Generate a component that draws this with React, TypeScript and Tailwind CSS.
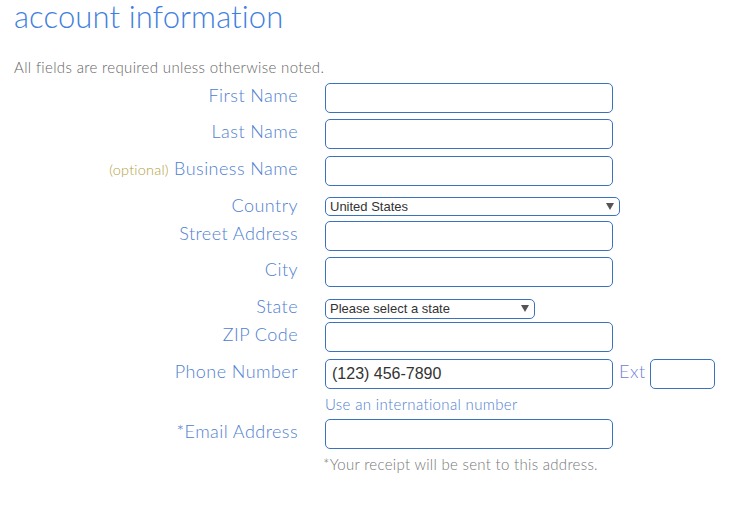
import React from "react";

const labelCls =
  "w-[284px] shrink-0 text-right text-[18px] leading-[24px] font-light tracking-[0.45px] text-[#4f80d0]";
const inputCls =
  "block h-[30px] w-[288px] rounded-[5px] border border-[#3a73bb] bg-white px-[6px] outline-none";

function Tri() {
  return (
    <svg width="8" height="7" viewBox="0 0 8 7" className="pointer-events-none absolute right-[6px] top-[6px]">
      <path d="M0 0 H8 L4 7 Z" fill="#555" />
    </svg>
  );
}

function Row({ label, children, className = "" }: { label: React.ReactNode; children: React.ReactNode; className?: string }) {
  return (
    <div className={"flex items-start " + className}>
      <div className={labelCls}>{label}</div>
      <div className="ml-[27px]">{children}</div>
    </div>
  );
}

export default function App() {
  return (
    <div
      className="relative h-[505px] w-[745px] overflow-hidden bg-white pl-[14px]"
      style={{ fontFamily: "Lato, 'Open Sans', sans-serif" }}
    >
      <h1 className="mt-[-4px] text-[31px] font-light leading-[40px] tracking-[0.1px] text-[#3f7fe0]">
        account information
      </h1>
      <p className="mt-[22px] text-[15px] font-light leading-[18px] tracking-[0.35px] text-[#666]">
        All fields are required unless otherwise noted.
      </p>
      <div className="flex flex-col">
        <Row label="First Name" className="mt-[7px]">
          <input className={inputCls} />
        </Row>
        <Row label="Last Name" className="mt-[6px]">
          <input className={inputCls} />
        </Row>
        <Row
          label={
            <>
              <span className="text-[14.5px] tracking-[0.2px] text-[#b3a040]">(optional)</span> Business Name
            </>
          }
          className="mt-[7px]"
        >
          <input className={inputCls} />
        </Row>
        <Row label="Country" className="mt-[7px]">
          <div className="relative mt-[4px] h-[19px] w-[295px]">
            <div
              className="h-[19px] w-[295px] rounded-[5px] border border-[#3a73bb] bg-white pl-[4px] text-[13px] leading-[17px] text-[#333]"
              style={{ fontFamily: "'Liberation Sans', Arial, sans-serif" }}
            >
              United States
            </div>
            <Tri />
          </div>
        </Row>
        <Row label="Street Address" className="mt-[4px]">
          <input className={inputCls} />
        </Row>
        <Row label="City" className="mt-[6px]">
          <input className={inputCls} />
        </Row>
        <Row label="State" className="mt-[7px]">
          <div className="relative mt-[5px] h-[20px] w-[210px]">
            <div
              className="h-[20px] w-[210px] rounded-[5px] border border-[#3a73bb] bg-white pl-[4px] text-[13px] leading-[18px] text-[#333]"
              style={{ fontFamily: "'Liberation Sans', Arial, sans-serif" }}
            >
              Please select a state
            </div>
            <Tri />
          </div>
        </Row>
        <Row label="ZIP Code" className="mt-[3px]">
          <input className={inputCls} />
        </Row>
        <Row label="Phone Number" className="mt-[7px]">
          <div className="flex items-start">
            <input
              className={inputCls + " text-[16px] text-[#333]"}
              style={{ fontFamily: "'Liberation Sans', Arial, sans-serif" }}
              defaultValue="(123) 456-7890"
            />
            <span className="ml-[6px] text-[18px] font-light leading-[24px] tracking-[0.6px] text-[#6f80d4]">Ext</span>
            <input className="ml-[4px] block h-[30px] w-[65px] rounded-[5px] border border-[#3a73bb] bg-white outline-none" />
          </div>
          <div className="mt-[6px] text-[15px] font-light leading-[18px] tracking-[0.35px] text-[#4f80d0]">
            Use an international number
          </div>
        </Row>
        <Row label="*Email Address" className="mt-[6px]">
          <input className={inputCls} />
          <div className="ml-[-2px] mt-[6px] text-[15px] font-light leading-[18px] tracking-[0.3px] text-[#777]">
            *Your receipt will be sent to this address.
          </div>
        </Row>
      </div>
    </div>
  );
}
